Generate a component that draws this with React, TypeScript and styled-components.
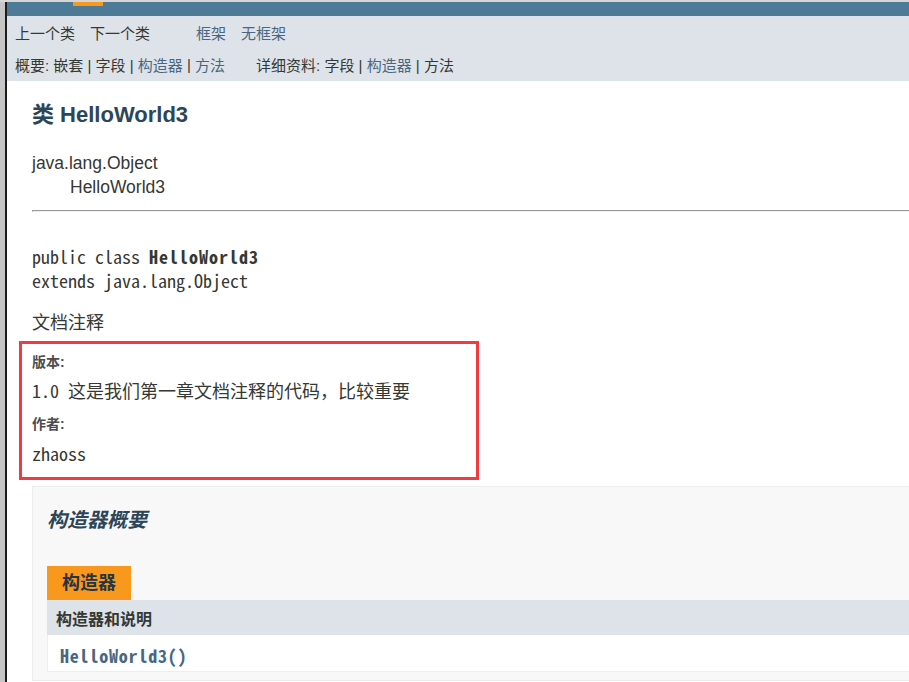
import React from "react";
import styled, { createGlobalStyle } from "styled-components";

const sans = `"Liberation Sans", Arial, "Noto Sans CJK SC", sans-serif`;
const mono = `"Noto Sans Mono CJK SC", "Liberation Mono", "Noto Sans CJK SC", monospace`;

const Global = createGlobalStyle`
  html, body { margin: 0; padding: 0; overflow: hidden; background: #fff; }
  body { font-family: ${sans}; color: #353833; }
`;

const Page = styled.div`
  width: 1000px;
  height: 682px;
  display: flex;
  flex-direction: column;
`;

const TopStrip = styled.div`
  height: 2px;
  background: #d6d6d6;
`;

const Frame = styled.div`
  flex: 1;
  display: flex;
`;

const Gutter = styled.div`
  width: 5px;
  background: #c6c6c6;
`;

const Window = styled.div`
  flex: 1;
  border-left: 2px solid #1c1c1c;
  display: flex;
  flex-direction: column;
`;

const TopNav = styled.div`
  height: 14px;
  background: #4d7a97;
  display: flex;
  padding-left: 66px;
`;

const ActiveCell = styled.div`
  width: 30px;
  height: 4px;
  background: #f8981d;
`;

const SubNav = styled.div`
  background: #dee3e9;
  height: 65px;
  box-sizing: border-box;
  padding-left: 8px;
  font-size: 15px;
`;

const NavRow = styled.div<{ $h: number }>`
  display: flex;
  align-items: center;
  height: ${(p) => p.$h}px;
  white-space: pre;
`;

const NavItem = styled.span<{ $link?: boolean; $gap?: number }>`
  color: ${(p) => (p.$link ? "#4a6782" : "#353833")};
  margin-left: ${(p) => p.$gap ?? 0}px;
`;

const Content = styled.div`
  padding-left: 25px;
  display: flex;
  flex-direction: column;
`;

const Title = styled.h2`
  margin: 19px 0 0;
  font-size: 22px;
  line-height: 30px;
  font-weight: bold;
  color: #2c4557;
`;

const InheritLine = styled.div<{ $indent?: number }>`
  font-size: 17.5px;
  line-height: 24px;
  padding-left: ${(p) => p.$indent ?? 0}px;
`;

const Inheritance = styled.div`
  margin-top: 21px;
`;

const Rule = styled.hr`
  margin: 11px 0 0;
  height: 0;
  border: 0;
  border-top: 1px solid #9a9a9a;
  border-left: 1px solid #9a9a9a;
  border-bottom: 1px solid #eeeeee;
`;

const Signature = styled.div`
  margin-top: 32px;
  display: flex;
  flex-direction: column;
`;

const CodeLine = styled.div`
  height: 24px;
  font-family: ${mono};
  font-size: 18px;
  line-height: 24px;
  white-space: pre;
  color: #353833;
`;

const StrongCode = styled.b`
  letter-spacing: 1px;
`;

const DocLabel = styled.div`
  margin-top: 19px;
  font-size: 18px;
  line-height: 24px;
`;

const NoteBox = styled.dl`
  margin: 6px 0 0 -13px;
  width: 460px;
  box-sizing: border-box;
  border: 3px solid #f03c3c;
  padding: 8px 0 12px 10px;
`;

const Term = styled.dt<{ $gap: number }>`
  margin-top: ${(p) => p.$gap}px;
  font-size: 14px;
  line-height: 20px;
  font-weight: bold;
  color: #4d4d4d;
`;

const Def = styled.dd<{ $gap: number }>`
  margin: ${(p) => p.$gap}px 0 0;
  font-family: ${mono};
  font-size: 18px;
  line-height: 24px;
  color: #353833;
`;

const Summary = styled.section`
  margin-top: 6px;
  background: #f8f8f8;
  border: 1px solid #ededed;
  padding: 19px 0 8px 14px;
  display: flex;
  flex-direction: column;
`;

const SummaryTitle = styled.h3`
  margin: 0;
  font-size: 20px;
  line-height: 28px;
  font-weight: bold;
  font-style: italic;
  color: #2c4557;
`;

const Caption = styled.div`
  margin-top: 32px;
  align-self: flex-start;
  height: 34px;
  line-height: 34px;
  padding: 0 15px;
  background: #f8981d;
  color: #253441;
  font-size: 18px;
  font-weight: bold;
`;

const HeaderRow = styled.div`
  height: 35px;
  display: flex;
  align-items: center;
  padding-left: 9px;
  background: #dee3e9;
  font-size: 16px;
  font-weight: bold;
  color: #353833;
`;

const DataRow = styled.div`
  height: 37px;
  display: flex;
  align-items: center;
  padding: 3px 0 0 12px;
  box-sizing: border-box;
  background: #fff;
  border-left: 1px solid #eeeeee;
  border-bottom: 1px solid #eeeeee;
`;

const MemberLink = styled.code`
  font-family: ${mono};
  font-size: 18px;
  font-weight: bold;
  letter-spacing: 0.8px;
  color: #4a6782;
`;

export default function App() {
  return (
    <Page>
      <Global />
      <TopStrip />
      <Frame>
        <Gutter />
        <Window>
          <TopNav>
            <ActiveCell />
          </TopNav>
          <SubNav>
            <NavRow $h={32}>
              <NavItem>上一个类</NavItem>
              <NavItem $gap={15}>下一个类</NavItem>
              <NavItem $link $gap={46}>框架</NavItem>
              <NavItem $link $gap={15}>无框架</NavItem>
            </NavRow>
            <NavRow $h={33}>
              <NavItem>概要: 嵌套 | 字段 | </NavItem>
              <NavItem $link>构造器</NavItem>
              <NavItem> | </NavItem>
              <NavItem $link>方法</NavItem>
              <NavItem $gap={31}>详细资料: 字段 | </NavItem>
              <NavItem $link>构造器</NavItem>
              <NavItem> | 方法</NavItem>
            </NavRow>
          </SubNav>
          <Content>
            <Title>类 HelloWorld3</Title>
            <Inheritance>
              <InheritLine>java.lang.Object</InheritLine>
              <InheritLine $indent={38}>HelloWorld3</InheritLine>
            </Inheritance>
            <Rule />
            <Signature>
              <CodeLine>
                public class <StrongCode>HelloWorld3</StrongCode>
              </CodeLine>
              <CodeLine>extends java.lang.Object</CodeLine>
            </Signature>
            <DocLabel>文档注释</DocLabel>
            <NoteBox>
              <Term $gap={0}>版本:</Term>
              <Def $gap={6}>1.0 这是我们第一章文档注释的代码，比较重要</Def>
              <Term $gap={12}>作者:</Term>
              <Def $gap={7}>zhaoss</Def>
            </NoteBox>
            <Summary>
              <SummaryTitle>构造器概要</SummaryTitle>
              <Caption>构造器</Caption>
              <HeaderRow>构造器和说明</HeaderRow>
              <DataRow>
                <MemberLink>HelloWorld3()</MemberLink>
              </DataRow>
            </Summary>
          </Content>
        </Window>
      </Frame>
    </Page>
  );
}
